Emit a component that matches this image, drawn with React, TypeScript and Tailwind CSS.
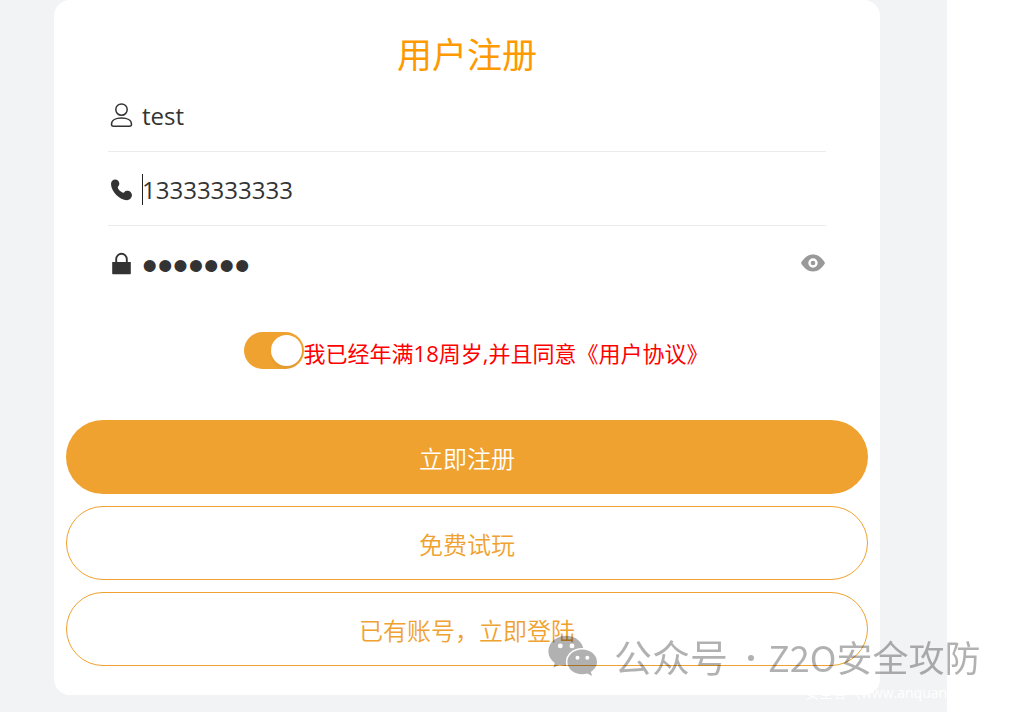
import { useState } from "react";
import type { ReactNode } from "react";

const font = 'font-["Open_Sans","Noto_Sans_CJK_SC",sans-serif]';

function UserIcon() {
  return (
    <svg viewBox="0 0 24 26" className="h-[26px] w-6" fill="none" stroke="#333" strokeWidth="1.5" aria-hidden="true">
      <circle cx="11.500" cy="7.600" r="5.700" />
      <path d="M1.500 22.200c0-4 4.200-6.200 10-6.200s10 2.200 10 6.200c0 1.400-.6 2-2 2h-16c-1.400 0-2-.6-2-2z" />
    </svg>
  );
}

function PhoneIcon() {
  return (
    <svg viewBox="0 0 24 26" className="h-[26px] w-6" fill="#333" aria-hidden="true">
      <path d="M1 8.100C1 5.300 3 3.600 5.200 3.600c2.100 0 3.900 1.600 4.100 3.600.1 1.500-.5 2.500-1.300 3.400-.4.700-.3 1.400.2 2.100 1.100 1.600 2.600 2.900 4.300 3.800.8.400 1.500.2 2.100-.4.200-.8.900-1.300 1.500-1.200.5-.2 1.200-.3 2-.1 2.400.4 4 2.500 3.900 4.800-.7 3.200-2.600 4.500-5 4.600C9.800 24.300 1.200 16 1 8.100z" />
    </svg>
  );
}

function LockIcon() {
  return (
    <svg viewBox="0 0 24 26" className="h-[26px] w-6" fill="#333" aria-hidden="true">
      <path d="M2.200 12h18.600v11.400q0 .8-.8.8H3q-.8 0-.8-.8z" />
      <path d="M6.200 12.500V9.100a5.300 5.300 0 0 1 10.600 0v3.400" fill="none" stroke="#333" strokeWidth="1.900" />
    </svg>
  );
}

function EyeIcon() {
  return (
    <svg viewBox="0 0 24 18" className="h-[18px] w-6" aria-hidden="true">
      <path d="M0 9C3 3.600 7 .5 12 .5S21 3.600 24 9c-3 5.400-7 8.500-12 8.500S3 14.400 0 9z" fill="#999" />
      <circle cx="12" cy="9" r="3.500" fill="#999" stroke="#fff" strokeWidth="2.400" />
    </svg>
  );
}

function WechatMark() {
  return (
    <svg viewBox="0 0 50 42" className="h-[42px] w-[50px]" aria-hidden="true">
      <mask id="bubbles">
        <rect width="50" height="42" fill="#fff" />
        <ellipse cx="34.200" cy="26.900" rx="16.300" ry="14" fill="#000" />
        <circle cx="12.300" cy="10.900" r="2.400" fill="#000" />
        <circle cx="24" cy="10.900" r="2.400" fill="#000" />
      </mask>
      <path
        mask="url(#bubbles)"
        d="M18 .8C8.300.800.400 7.700.400 16.300c0 4.700 2.400 8.700 6.300 11.500L5.400 32.800l6-3.000c2.100.7 4.200 1.100 6.600 1.100 9.700 0 17.600-6.900 17.600-15.100S27.700.8 18 .8z"
      />
      <path
        fillRule="evenodd"
        d="M34.200 14.600c-8.200 0-14.800 5.500-14.800 12.400s6.600 12.300 14.800 12.300c1.700 0 3.400-.3 4.900-.7l5 2.400-1.300-4.200c3.800-2.300 6.200-5.800 6.200-9.800 0-6.900-6.600-12.400-14.800-12.400zM29.500 20.800a2 2 0 1 1 0 4 2 2 0 0 1 0-4zM39.300 20.800a2 2 0 1 1 0 4 2 2 0 0 1 0-4z"
      />
    </svg>
  );
}

function Field(props: { icon: ReactNode; divided?: boolean; children: ReactNode }) {
  return (
    <div
      className={
        props.divided
          ? "flex h-[74px] items-center border-b border-[#ececec] pt-0.5 pl-0.5"
          : "flex h-[74px] items-center pt-0.5 pl-0.5"
      }
    >
      <span className="pb-0.5">{props.icon}</span>
      {props.children}
    </div>
  );
}

const inputClass = "ml-2 h-9 min-w-0 flex-1 bg-transparent text-2xl text-[#333] outline-none";
const passwordClass =
  'ml-2 h-9 min-w-0 flex-1 bg-transparent pt-1 font-["Liberation_Sans",sans-serif] text-[44px] leading-8 text-[#333] outline-none';

export default function App() {
  const [adult, setAdult] = useState(true);
  const [visible, setVisible] = useState(false);

  return (
    <div className={`relative min-h-screen overflow-hidden bg-white ${font}`}>
      <main className="mr-[74px] min-h-screen bg-[#f2f3f5] pr-[67px] pb-4 pl-[54px]">
        <form className="rounded-[16px] bg-white px-3 pt-7 pb-[29px]" onSubmit={(e) => e.preventDefault()}>
          <h1 className="pt-1 text-center text-[35px] leading-[46px] font-normal text-[#ff9900]">用户注册</h1>

          <div className="mx-[42px]">
            <Field icon={<UserIcon />} divided>
              <input aria-label="用户名" className={inputClass} defaultValue="test" />
            </Field>
            <Field icon={<PhoneIcon />} divided>
              <div className="relative flex flex-1">
                <input aria-label="手机号" type="tel" className={inputClass} defaultValue="13333333333" />
                <span className="absolute inset-y-0 left-2 my-auto h-[31px] w-px bg-[#222]" />
              </div>
            </Field>
            <Field icon={<LockIcon />}>
              <input
                aria-label="密码"
                type={visible ? "text" : "password"}
                className={visible ? inputClass : passwordClass}
                defaultValue="1234567"
              />
              <button type="button" aria-label="显示密码" className="mr-px pb-0.5" onClick={() => setVisible(!visible)}>
                <EyeIcon />
              </button>
            </Field>
          </div>

          <div className="mt-8 flex h-[37px] items-center justify-center pl-[18px]">
            <label className="flex items-center text-[22px] text-[#ff0000]">
              <input type="checkbox" className="peer sr-only" checked={adult} onChange={() => setAdult(!adult)} />
              <span className="flex h-[37px] w-[60px] items-center justify-start rounded-full bg-[#ccc] p-0.5 peer-checked:justify-end peer-checked:bg-[#efa22f]">
                <span className="size-[31px] rounded-full bg-white shadow-[0_3px_3px_rgba(0,0,0,0.05)]" />
              </span>
              <span className="pt-1.5">我已经年满18周岁,并且同意《用户协议》</span>
            </label>
          </div>

          <div className="mt-[51px] flex flex-col gap-3 text-2xl font-[350]">
            <button type="submit" className="h-[74px] rounded-full bg-[#efa22f] pt-1 text-white">
              立即注册
            </button>
            <button type="button" className="h-[74px] rounded-full border border-[#efa22f] pt-1 text-[#efa22f]">
              免费试玩
            </button>
            <button type="button" className="h-[74px] rounded-full border border-[#efa22f] pt-1 text-[#efa22f]">
              已有账号，立即登陆
            </button>
          </div>
        </form>
      </main>

      <div className="pointer-events-none absolute top-[683px] left-[805px] text-sm leading-5 whitespace-nowrap text-white">
        安全客（www.anquan
      </div>
      <div className='pointer-events-none absolute top-[633px] left-[548px] flex items-center font-["Noto_Sans_CJK_SC",sans-serif] whitespace-nowrap opacity-30'>
        <WechatMark />
        <span className="ml-4 text-[38px] leading-[46px]">公众号</span>
        <span className="mt-1 ml-5 size-[6px] rounded-full bg-black" />
        <span className="ml-3.5 text-4xl leading-[46px]">Z2O安全攻防</span>
      </div>
    </div>
  );
}
